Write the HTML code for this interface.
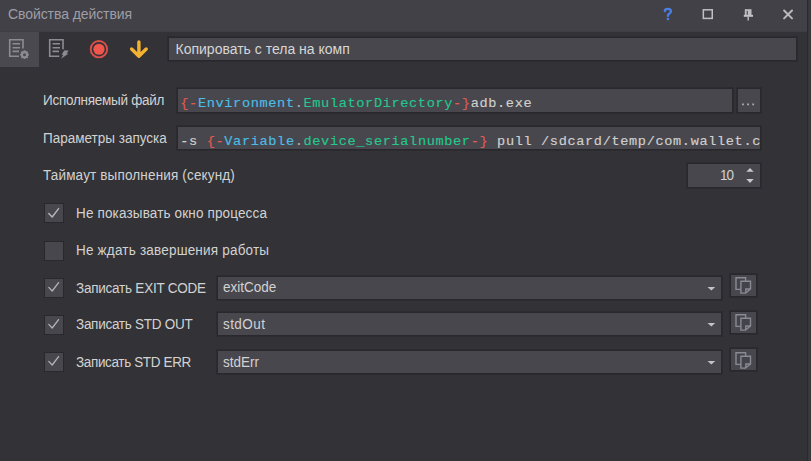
<!DOCTYPE html>
<html><head><meta charset="utf-8">
<style>
*{margin:0;padding:0;box-sizing:border-box}
html,body{width:811px;height:461px;overflow:hidden;background:#333237}
body{position:relative;font-family:"Liberation Sans",sans-serif;}
.a{position:absolute}
.t{position:absolute;line-height:1;white-space:pre;font-size:13.5px;color:#d2d2d2;transform:scaleY(1.1);transform-origin:0 11.5px}
.m{position:absolute;line-height:1;white-space:pre;font-family:"Liberation Mono",monospace;font-size:13.6px;letter-spacing:0.64px;color:#d0d0d0;-webkit-text-stroke:0.15px currentColor;overflow:hidden}
.box{position:absolute;background:#48474d;border:1px solid #29282d;box-shadow:0 0 0 1px rgba(41,40,45,0.7)}
.r{color:#e05a50}.b{color:#4bbde6}.g{color:#25c78e}.d{color:#b0b0b0}
</style></head><body>
<!-- title bar -->
<div class="a" style="left:0;top:0;width:807px;height:31px;background:#424147"></div>
<div class="a" style="left:0;top:31px;width:807px;height:1px;background:#3e3d43"></div>
<div class="t" style="left:8px;top:7.1px;font-size:14px;color:#9e9ea6;letter-spacing:-0.08px">Свойства действия</div>
<!-- help ? -->
<svg class="a" style="left:660px;top:6px" width="16" height="17" viewBox="0 0 16 17">
<path d="M4.8 5.2 C4.8 3.5 6.2 2.9 7.9 2.9 C9.7 2.9 10.9 3.9 10.9 5.3 C10.9 6.9 9.5 7.4 8.5 8.4 C8 8.9 7.9 9.3 7.9 9.9" fill="none" stroke="#4a7fe6" stroke-width="2.3" stroke-linecap="round"/>
<circle cx="7.9" cy="13" r="1.35" fill="#4a7fe6"/>
</svg>
<!-- maximize -->
<svg class="a" style="left:698px;top:4px" width="20" height="20" viewBox="0 0 20 20"><rect x="5.35" y="5.8" width="8.9" height="8.6" fill="none" stroke="#c0c0c2" stroke-width="1.5"/></svg>
<!-- pin -->
<svg class="a" style="left:742px;top:8px" width="12" height="14" viewBox="0 0 12 14">
<rect x="2.8" y="1.2" width="6.7" height="6" fill="#bdbdc0"/>
<rect x="4.6" y="2.9" width="1.4" height="4.1" fill="#606066"/>
<rect x="1.8" y="6.8" width="9.2" height="2" fill="#c4c4c6"/>
<rect x="5.5" y="8.7" width="1.4" height="3.8" fill="#bdbdc0"/>
</svg>
<!-- close -->
<svg class="a" style="left:781px;top:8px" width="13" height="13" viewBox="0 0 13 13">
<path d="M3.1 2.5 L11 10.4 M11 2.5 L3.1 10.4" stroke="#bababd" stroke-width="2" stroke-linecap="round"/>
</svg>
<!-- right stripe -->
<div class="a" style="left:807px;top:0;width:1px;height:461px;background:#2a292e"></div>
<div class="a" style="left:808px;top:0;width:3px;height:461px;background:#39383d"></div>

<!-- toolbar -->
<div class="a" style="left:0;top:32px;width:39px;height:35px;background:#4a4950"></div>
<!-- doc gear icon -->
<svg class="a" style="left:0;top:32px" width="39" height="35" viewBox="0 0 39 35">
<path d="M23 16.6 V7.8 H9.7 V24.3 H19" fill="none" stroke="#8c8c94" stroke-width="1.6"/>
<path d="M12.5 11.8 H20 M12.5 15.7 H20 M12.5 19.4 H19" stroke="#8c8c94" stroke-width="1.6"/>
<g transform="translate(24.5 22.7)" fill="#8c8c94">
<circle r="3.6"/>
<path d="M-0.9 -4.4 H0.9 V4.4 H-0.9Z M-4.4 -0.9 V0.9 H4.4 V-0.9Z"/>
<path d="M-0.9 -4.4 H0.9 V4.4 H-0.9Z M-4.4 -0.9 V0.9 H4.4 V-0.9Z" transform="rotate(45)"/>
<circle r="1.5" fill="#4a4950"/>
</g>
</svg>
<!-- doc lightning icon -->
<svg class="a" style="left:39px;top:32px" width="39" height="35" viewBox="0 0 39 35">
<path d="M24 17.3 V7.7 H10.7 V24.3 H20.3" fill="none" stroke="#8c8c94" stroke-width="1.6"/>
<path d="M13.5 11.8 H21 M13.5 15.7 H21 M13.5 19.4 H20" stroke="#8c8c94" stroke-width="1.6"/>
<path d="M25.2 18.4 L29.6 18.4 L27.6 21.4 L29.6 21.4 L22 26.8 L24.4 22.8 L22.6 22.8Z" fill="#8c8c94"/>
</svg>
<!-- record icon -->
<svg class="a" style="left:88px;top:38px" width="22" height="22" viewBox="0 0 22 22">
<circle cx="10.9" cy="11.2" r="8.2" fill="none" stroke="#d9504a" stroke-width="1.9"/>
<circle cx="10.95" cy="11.25" r="5.6" fill="#f0564c"/>
</svg>
<!-- arrow -->
<svg class="a" style="left:128px;top:38px" width="22" height="22" viewBox="0 0 22 22">
<path d="M10.9 4 V18.2 M3.6 11 L10.9 18.3 L18.2 11" fill="none" stroke="#f4b233" stroke-width="3.4" stroke-linecap="round" stroke-linejoin="round"/>
</svg>
<!-- name input -->
<div class="box" style="left:168px;top:37px;width:629px;height:24.4px"></div>
<div class="t" style="left:175.5px;top:42px;font-size:14px;color:#d6d6d6">Копировать с тела на комп</div>

<!-- form rows -->
<div class="t" style="left:43px;top:93.9px;letter-spacing:-0.27px">Исполняемый файл</div>
<div class="box" style="left:177px;top:88px;width:556px;height:25px"></div>
<div class="m" style="left:180.3px;top:97px;width:552px"><span class="r">{-</span><span class="b">Environment</span><span class="d">.</span><span class="g">EmulatorDirectory</span><span class="r">-}</span>adb.exe</div>
<div class="box" style="left:737px;top:88px;width:24px;height:25px"></div>
<svg class="a" style="left:737px;top:88px" width="24" height="25" viewBox="0 0 24 25"><path d="M5.1 15.5 h1.8 v1.8 h-1.8z M10.2 15.5 h1.8 v1.8 h-1.8z M15.3 15.5 h1.8 v1.8 h-1.8z" fill="#a8b0bc"/></svg>

<div class="t" style="left:43px;top:131.7px">Параметры запуска</div>
<div class="box" style="left:177px;top:126px;width:584px;height:24px"></div>
<div class="m" style="left:180.3px;top:134.8px;width:580px">-s <span class="r">{-</span><span class="b">Variable</span><span class="d">.</span><span class="g">device_serialnumber</span><span class="r">-}</span> pull /sdcard/temp/com.wallet.c</div>

<div class="t" style="left:43px;top:169.3px;letter-spacing:0.16px">Таймаут выполнения (секунд)</div>
<div class="box" style="left:687px;top:163px;width:74px;height:25px"></div>
<div class="t" style="left:720px;top:169.4px;font-size:13.5px;letter-spacing:-0.9px">10</div>
<svg class="a" style="left:744px;top:166px" width="12" height="19" viewBox="0 0 12 19">
<path d="M2.3 5.8 L6 2 L9.7 5.8Z M2.3 13 L6 17 L9.7 13Z" fill="#c8c8ca"/>
</svg>

<!-- checkboxes -->
<div class="box" style="left:44px;top:203.4px;width:20px;height:19.5px;box-shadow:none"></div>
<svg class="a" style="left:44px;top:203.5px" width="19" height="19" viewBox="0 0 19 19"><path d="M4.8 9.4 L8.2 13 L14.6 4.6" fill="none" stroke="#b8b8ba" stroke-width="1.4" stroke-linecap="round" stroke-linejoin="round"/></svg>
<div class="t" style="left:76px;top:207.1px;letter-spacing:0.15px">Не показывать окно процесса</div>

<div class="box" style="left:44px;top:241px;width:20px;height:19.5px;box-shadow:none"></div>
<div class="t" style="left:76px;top:243.8px;letter-spacing:0.2px">Не ждать завершения работы</div>

<div class="box" style="left:44px;top:278px;width:20px;height:19.5px;box-shadow:none"></div>
<svg class="a" style="left:44px;top:278px" width="19" height="19" viewBox="0 0 19 19"><path d="M4.8 9.4 L8.2 13 L14.6 4.6" fill="none" stroke="#b4b4b6" stroke-width="1.3" stroke-linecap="round" stroke-linejoin="round"/></svg>
<div class="t" style="left:76px;top:281.5px;letter-spacing:-0.23px">Записать EXIT CODE</div>
<div class="box" style="left:217px;top:276px;width:505px;height:24px"></div>
<div class="t" style="left:223px;top:281.2px">exitCode</div>
<svg class="a" style="left:705px;top:284px" width="12" height="8" viewBox="0 0 12 8"><path d="M2.5 2.9 H10.2 L6.35 6.6Z" fill="#c4c4c6"/></svg>
<div class="box" style="left:730px;top:274px;width:27px;height:23px"></div>

<div class="box" style="left:44px;top:315px;width:20px;height:19.5px;box-shadow:none"></div>
<svg class="a" style="left:44px;top:315px" width="19" height="19" viewBox="0 0 19 19"><path d="M4.8 9.4 L8.2 13 L14.6 4.6" fill="none" stroke="#b4b4b6" stroke-width="1.3" stroke-linecap="round" stroke-linejoin="round"/></svg>
<div class="t" style="left:76px;top:318.2px;letter-spacing:-0.27px">Записать STD OUT</div>
<div class="box" style="left:217px;top:312px;width:505px;height:24px"></div>
<div class="t" style="left:223px;top:318px;letter-spacing:0.43px">stdOut</div>
<svg class="a" style="left:705px;top:320px" width="12" height="8" viewBox="0 0 12 8"><path d="M2.5 2.9 H10.2 L6.35 6.6Z" fill="#c4c4c6"/></svg>
<div class="box" style="left:730px;top:310.5px;width:27px;height:23px"></div>

<div class="box" style="left:44px;top:352px;width:20px;height:19.5px;box-shadow:none"></div>
<svg class="a" style="left:44px;top:352px" width="19" height="19" viewBox="0 0 19 19"><path d="M4.8 9.4 L8.2 13 L14.6 4.6" fill="none" stroke="#b4b4b6" stroke-width="1.3" stroke-linecap="round" stroke-linejoin="round"/></svg>
<div class="t" style="left:76px;top:356px;letter-spacing:-0.36px">Записать STD ERR</div>
<div class="box" style="left:217px;top:350px;width:505px;height:24px"></div>
<div class="t" style="left:223px;top:355.8px">stdErr</div>
<svg class="a" style="left:705px;top:358px" width="12" height="8" viewBox="0 0 12 8"><path d="M2.5 2.9 H10.2 L6.35 6.6Z" fill="#c4c4c6"/></svg>
<div class="box" style="left:730px;top:348.3px;width:27px;height:23px"></div>

<!-- copy icons -->
<svg class="a" style="left:729px;top:273px" width="29" height="25" viewBox="0 0 29 25"><g id="cp" fill="none" stroke="#8a8a94" stroke-width="1.4"><path d="M11.9 16.4 H7 V4.8 H16.6 V8.3 H11.9Z" fill="#444349" stroke="none"/><path d="M11.9 16.4 H7 V4.8 H16.6 V8.3"/><path d="M11.9 8.3 H21.5 V16 L16.5 20.1 H11.9Z" fill="#444349"/><path d="M21.5 16 H16.8 V20.1"/></g></svg>
<svg class="a" style="left:729px;top:309.5px" width="29" height="25" viewBox="0 0 29 25"><use href="#cp"/></svg>
<svg class="a" style="left:729px;top:347.5px" width="29" height="25" viewBox="0 0 29 25"><use href="#cp"/></svg>
</body></html>
